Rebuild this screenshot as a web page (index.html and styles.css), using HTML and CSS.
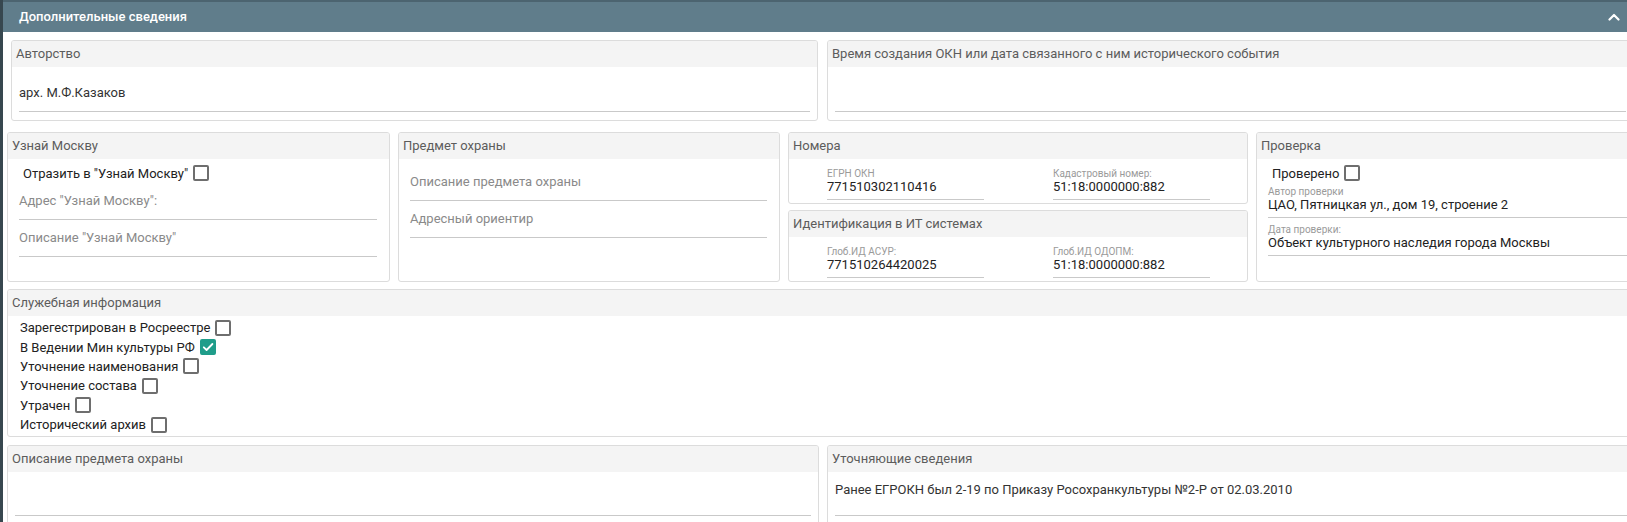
FILE: index.html
```html
<!DOCTYPE html>
<html lang="ru">
<head>
<meta charset="utf-8">
<title>Дополнительные сведения</title>
<link rel="stylesheet" href="styles.css">
</head>
<body>
<div class="page">
  <div class="section-head">
    <span class="section-title">Дополнительные сведения</span>
    <svg class="chevron" width="12" height="8" viewBox="0 0 12 8"><path d="M1.5 6.5 L6 2 L10.5 6.5" fill="none" stroke="#fff" stroke-width="2.2" stroke-linecap="round" stroke-linejoin="round"/></svg>
  </div>

  <div class="row row1">
    <div class="panel">
      <div class="panel-head">Авторство</div>
      <div class="panel-body pad-a">
        <div class="field field-big">арх. М.Ф.Казаков</div>
      </div>
    </div>
    <div class="panel">
      <div class="panel-head">Время создания ОКН или дата связанного с ним исторического события</div>
      <div class="panel-body pad-a">
        <div class="field field-big">&nbsp;</div>
      </div>
    </div>
  </div>

  <div class="row row2">
    <div class="panel">
      <div class="panel-head">Узнай Москву</div>
      <div class="panel-body pad-b">
        <label class="check check-top"><span>Отразить в "Узнай Москву"</span><span class="box"></span></label>
        <div class="field field-ph">Адрес "Узнай Москву":</div>
        <div class="field field-ph">Описание "Узнай Москву"</div>
      </div>
    </div>
    <div class="panel">
      <div class="panel-head">Предмет охраны</div>
      <div class="panel-body pad-b pad-top">
        <div class="field field-ph">Описание предмета охраны</div>
        <div class="field field-ph">Адресный ориентир</div>
      </div>
    </div>
    <div class="stack">
      <div class="panel">
        <div class="panel-head">Номера</div>
        <div class="panel-body pairs">
          <div class="pair"><div class="small-field"><div class="lbl">ЕГРН ОКН</div><div class="val">771510302110416</div></div></div>
          <div class="pair"><div class="small-field"><div class="lbl">Кадастровый номер:</div><div class="val">51:18:0000000:882</div></div></div>
        </div>
      </div>
      <div class="panel">
        <div class="panel-head">Идентификация в ИТ системах</div>
        <div class="panel-body pairs">
          <div class="pair"><div class="small-field"><div class="lbl">Глоб.ИД АСУР:</div><div class="val">771510264420025</div></div></div>
          <div class="pair"><div class="small-field"><div class="lbl">Глоб.ИД ОДОПМ:</div><div class="val">51:18:0000000:882</div></div></div>
        </div>
      </div>
    </div>
    <div class="panel">
      <div class="panel-head">Проверка</div>
      <div class="panel-body pad-b">
        <label class="check check-top"><span>Проверено</span><span class="box"></span></label>
        <div class="small-field wide first"><div class="lbl">Автор проверки</div><div class="val">ЦАО, Пятницкая ул., дом 19, строение 2</div></div>
        <div class="small-field wide"><div class="lbl">Дата проверки:</div><div class="val">Объект культурного наследия города Москвы</div></div>
      </div>
    </div>
  </div>

  <div class="row row3">
    <div class="panel">
      <div class="panel-head">Служебная информация</div>
      <div class="panel-body checks">
        <label class="check"><span>Зарегестрирован в Росреестре</span><span class="box"></span></label>
        <label class="check"><span>В Ведении Мин культуры РФ</span><span class="box on"><svg width="12" height="12" viewBox="0 0 12 12"><path d="M1.8 6.3 L4.6 9 L10.4 3" fill="none" stroke="#fff" stroke-width="1.8" stroke-linecap="round" stroke-linejoin="round"/></svg></span></label>
        <label class="check"><span>Уточнение наименования</span><span class="box"></span></label>
        <label class="check"><span>Уточнение состава</span><span class="box"></span></label>
        <label class="check"><span>Утрачен</span><span class="box"></span></label>
        <label class="check"><span>Исторический архив</span><span class="box"></span></label>
      </div>
    </div>
  </div>

  <div class="row row4">
    <div class="panel">
      <div class="panel-head">Описание предмета охраны</div>
      <div class="panel-body pad-a">
        <div class="field field-area">&nbsp;</div>
      </div>
    </div>
    <div class="panel">
      <div class="panel-head">Уточняющие сведения</div>
      <div class="panel-body pad-a">
        <div class="field field-area">Ранее ЕГРОКН был 2-19 по Приказу Росохранкультуры №2-Р от 02.03.2010</div>
      </div>
    </div>
  </div>
</div>
</body>
</html>
```

FILE: styles.css
```css
* { box-sizing: border-box; }

html, body {
  margin: 0;
  padding: 0;
}

body {
  width: 1627px;
  height: 522px;
  overflow: hidden;
  background: #fff;
  font-family: Roboto, "Noto Sans", "Liberation Sans", sans-serif;
  font-size: 13px;
  color: #333;
}

.page {
  width: 1700px;
  min-height: 522px;
  border-left: 3px solid #37474f;
}

.section-head {
  width: 1624px;
  height: 32px;
  border-top: 2px solid #4c6470;
  background: #607d8b;
  display: flex;
  align-items: center;
  justify-content: space-between;
  padding: 0 7px 0 16px;
  color: #fff;
}

.section-title {
  font-weight: 500;
  font-size: 13px;
  line-height: 16px;
}

.chevron { display: block; }

.row { display: grid; }

.row1 {
  grid-template-columns: 807px 807px;
  column-gap: 9px;
  margin: 8px 0 0 8px;
}

.row2 {
  grid-template-columns: 383px 382px 460px 420px;
  column-gap: 8px;
  margin: 11px 0 0 4px;
  align-items: stretch;
}

.row3 {
  grid-template-columns: 1660px;
  margin: 7px 0 0 4px;
}

.row4 {
  grid-template-columns: 812px 812px;
  column-gap: 8px;
  margin: 8px 0 0 4px;
}

.panel {
  border: 1px solid #dcdcdc;
  border-radius: 3px;
  background: #fff;
  overflow: hidden;
}

.panel-head {
  height: 26px;
  line-height: 26px;
  padding-left: 4px;
  background: #f4f4f4;
  color: #5c5c5c;
  white-space: nowrap;
}

.pad-a { padding: 0 7px 8px; }

.pad-b { padding: 0 12px 0 11px; }

.pad-top { padding-top: 5px; }

.field {
  border-bottom: 1px solid #c9c9c9;
  line-height: 18px;
  white-space: nowrap;
}

.field-big { padding: 17px 0 9px 0; }

.field-ph {
  padding: 9px 0 9px 0;
  color: #8a8a8a;
}

.field-area { padding: 9px 0 16px 0; }

.check {
  display: flex;
  align-items: center;
  gap: 5px;
  height: 20px;
  color: #222;
}

.check-top {
  margin-top: 4px;
  padding-left: 4px;
}

.box {
  width: 16px;
  height: 16px;
  border: 2px solid #6e6e6e;
  border-radius: 2px;
  display: flex;
  align-items: center;
  justify-content: center;
  flex: none;
}

.box.on {
  background: #1f9d8a;
  border-color: #1f9d8a;
}

.box svg { display: block; }

.stack {
  display: flex;
  flex-direction: column;
  gap: 6px;
}

.pairs {
  display: grid;
  grid-template-columns: 1fr 1fr;
  padding: 9px 0 3px;
}

.pair { padding: 0 34px 0 38px; }

.pair:nth-child(2) { padding: 0 37px 0 35px; }

.small-field {
  border-bottom: 1px solid #c9c9c9;
  padding-bottom: 5px;
}

.lbl {
  font-size: 10px;
  line-height: 12px;
  color: #9a9a9a;
}

.val {
  line-height: 14px;
  color: #222;
  white-space: nowrap;
}

.small-field.wide { margin-top: 6px; }

.small-field.first { margin-top: 3px; }

.checks {
  padding: 2px 0 2px 12px;
}

.checks .check {
  height: 19.4px;
}
```
